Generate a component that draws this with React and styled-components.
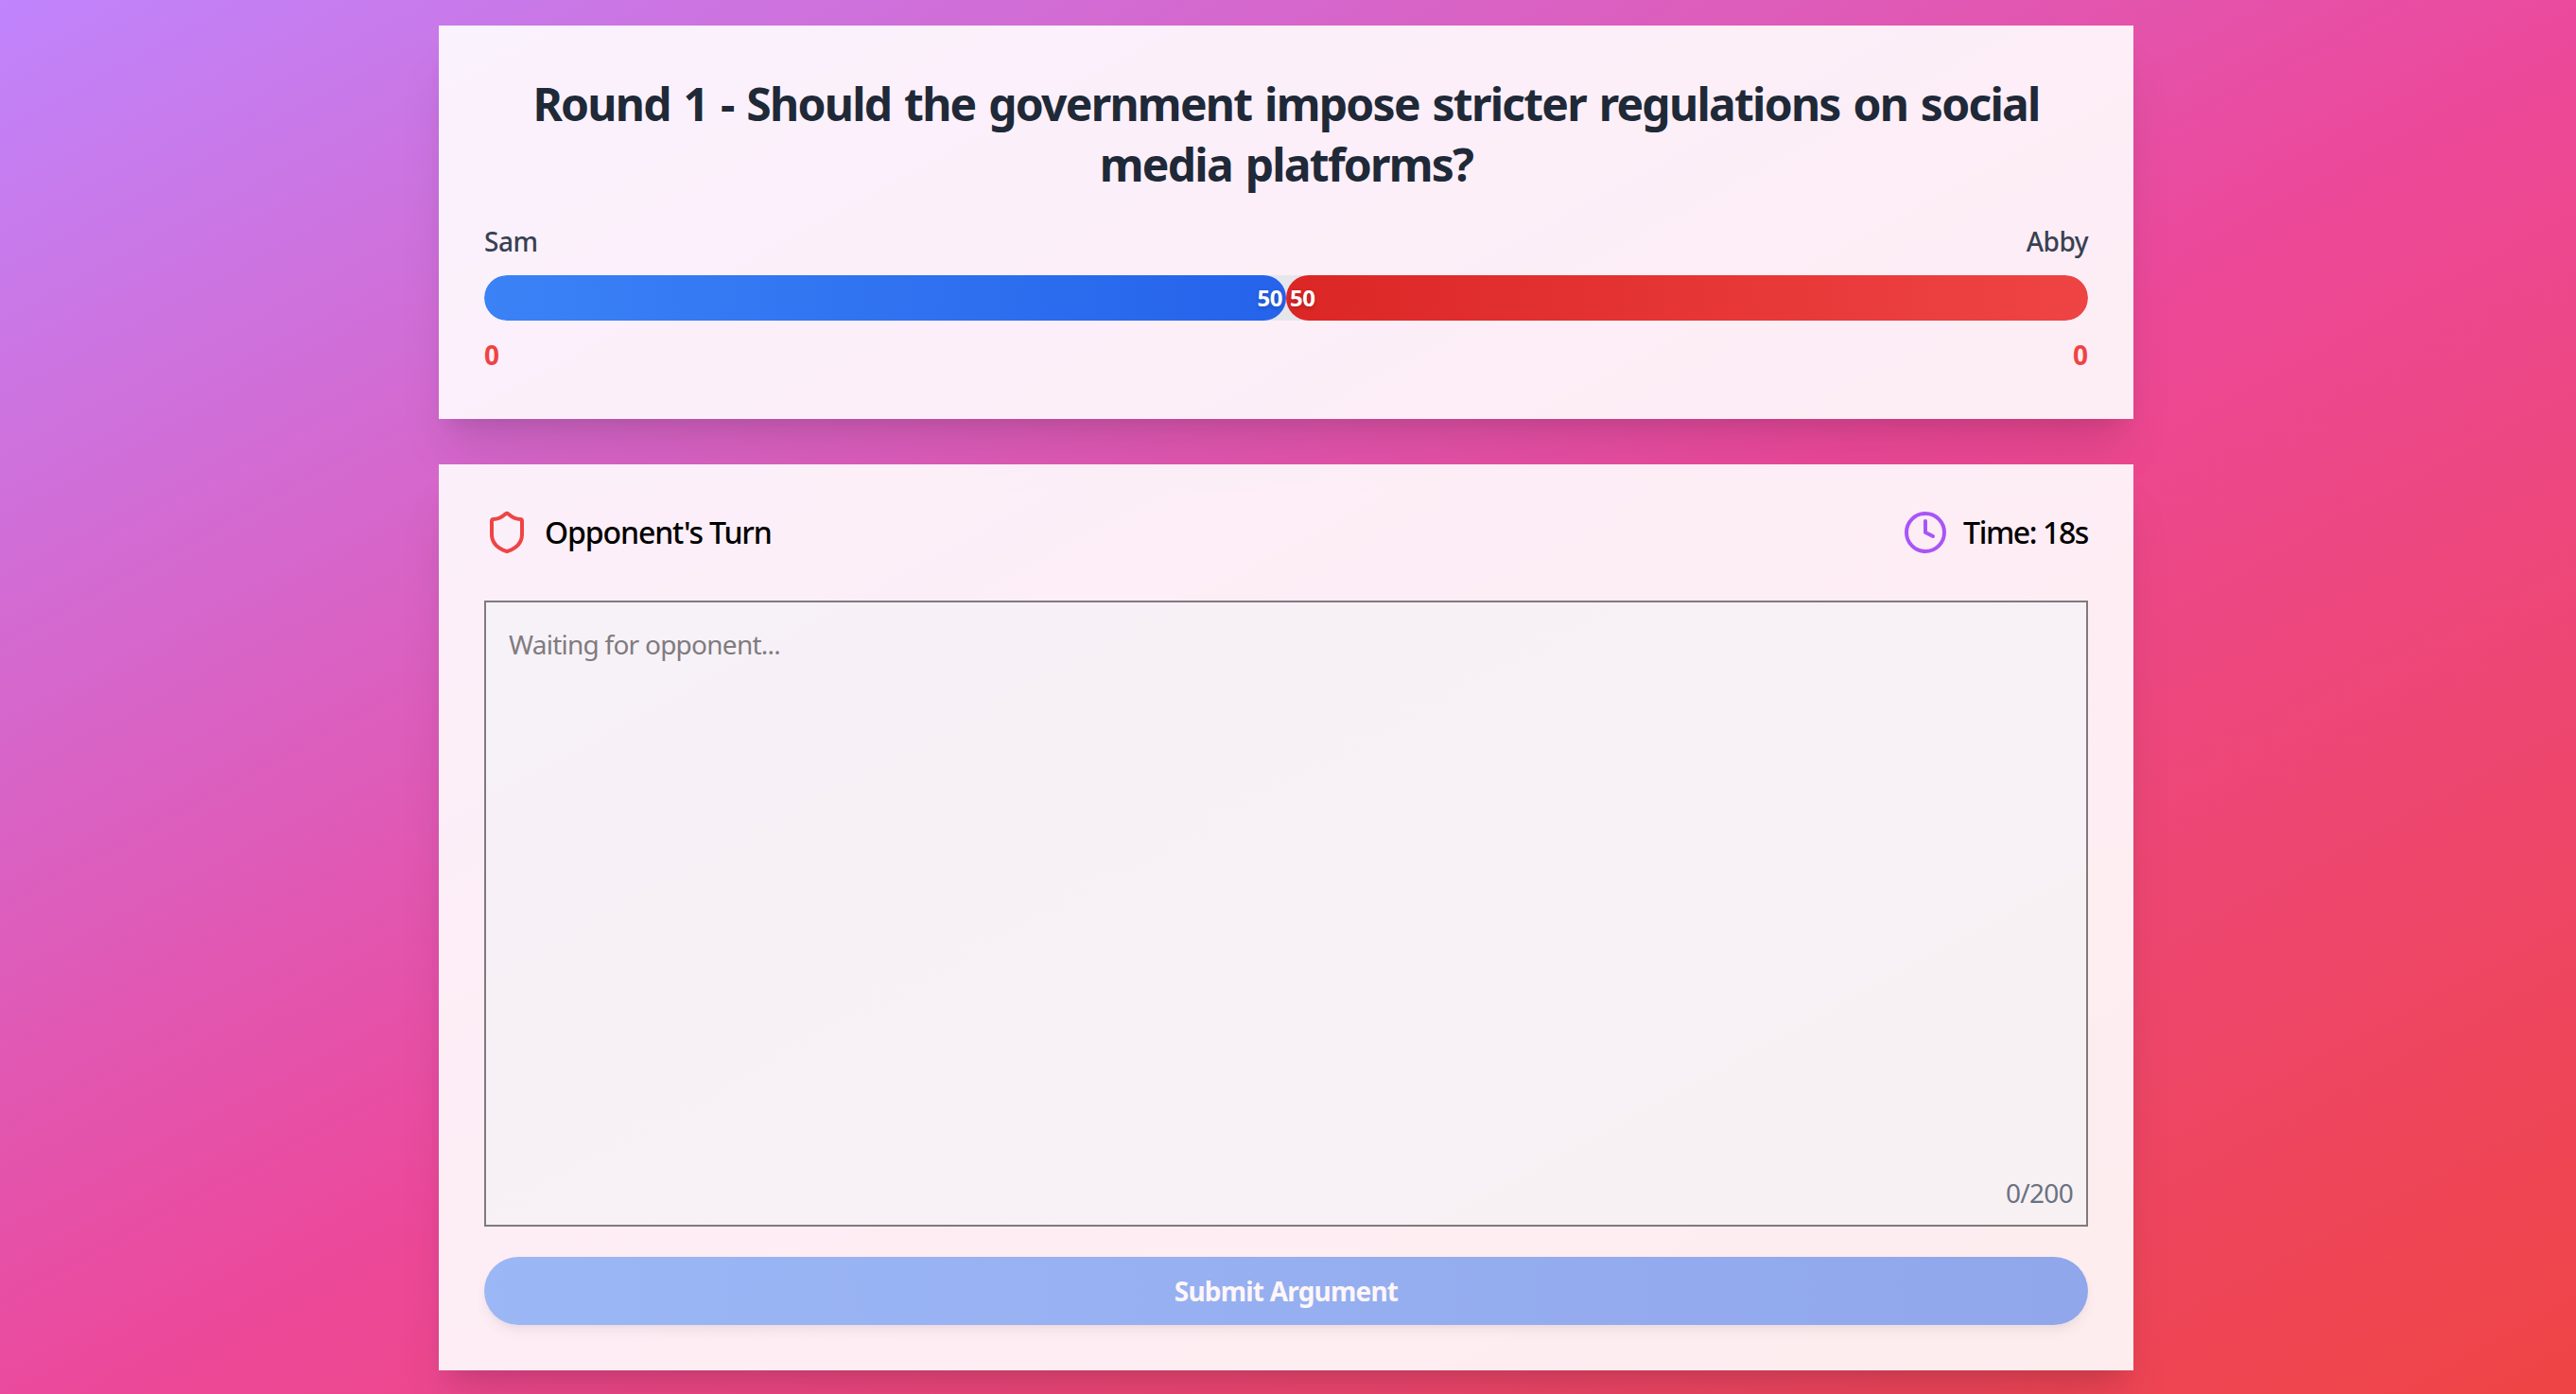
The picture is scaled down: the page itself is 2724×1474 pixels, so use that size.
import React from "react";
import styled, { createGlobalStyle } from "styled-components";
import { Shield, Clock } from "lucide-react";

const Global = createGlobalStyle`
  html, body { margin: 0; padding: 0; }
  body { font-family: "Noto Sans", "Open Sans", "Liberation Sans", sans-serif; }
  * { box-sizing: border-box; }
`;

const Page = styled.div`
  min-height: 1474px;
  padding: 27px 4px 25px 0;
  display: flex;
  flex-direction: column;
  align-items: center;
  gap: 48px;
  background: linear-gradient(to bottom right, #c084fc 0%, #ec4899 52%, #ef4444 100%);
`;

const Card = styled.section`
  width: 1792px;
  padding: 48px;
  background: rgba(255, 255, 255, 0.9);
  box-shadow: 0 40px 50px -10px rgba(0, 0, 0, 0.1), 0 16px 20px -12px rgba(0, 0, 0, 0.1);
`;

const Title = styled.h1`
  margin: 0 0 29px;
  padding-top: 3px;
  font-size: 48px;
  line-height: 64px;
  font-weight: 700;
  letter-spacing: -1.75px;
  word-spacing: 3px;
  text-align: center;
  color: #1f2937;
`;

const SpreadRow = styled.div`
  display: flex;
  justify-content: space-between;
  align-items: center;
`;

const Name = styled.span`
  font-size: 28px;
  line-height: 40px;
  font-weight: 500;
  letter-spacing: -0.5px;
  color: #374151;
`;

const Score = styled.span`
  font-size: 28px;
  line-height: 40px;
  font-weight: 700;
  color: #ef4444;
`;

const Track = styled.div`
  display: flex;
  height: 48px;
  margin: 16px 0;
  border-radius: 24px;
  overflow: hidden;
  background: #e5e7eb;
`;

const Fill = styled.div`
  flex: 1;
  display: flex;
  align-items: center;
  justify-content: ${(p) => (p.$side === "left" ? "flex-end" : "flex-start")};
  padding: 0 4px;
  border-radius: 24px;
  background: ${(p) =>
    p.$side === "left"
      ? "linear-gradient(to right, #3b82f6, #2563eb)"
      : "linear-gradient(to right, #dc2626, #ef4444)"};
  font-size: 24px;
  line-height: 32px;
  font-weight: 700;
  letter-spacing: -0.5px;
  color: #fff;
  text-shadow: 0 2px 4px rgba(0, 0, 0, 0.2);
`;

const TurnHeader = styled.header`
  display: flex;
  justify-content: space-between;
  align-items: center;
  height: 48px;
  margin-bottom: 48px;
`;

const Status = styled.div`
  display: flex;
  align-items: center;
  gap: 16px;
  font-size: 32px;
  line-height: 48px;
  font-weight: 500;
  letter-spacing: ${(p) => p.$tracking};
  color: #000;
`;

const ArgumentBox = styled.div`
  position: relative;
  height: 662px;
  margin-bottom: 32px;
`;

const ArgumentInput = styled.textarea`
  display: block;
  width: 100%;
  height: 100%;
  padding: 24px;
  resize: none;
  border: 2px solid #807a7d;
  border-radius: 0;
  outline: none;
  background: rgba(243, 244, 246, 0.6);
  font-family: inherit;
  font-size: 28px;
  line-height: 40px;
  letter-spacing: -0.75px;
  color: #000;
  &::placeholder {
    color: #807b80;
    opacity: 1;
  }
`;

const Counter = styled.span`
  position: absolute;
  right: 16px;
  bottom: 16px;
  font-size: 28px;
  line-height: 40px;
  letter-spacing: -0.7px;
  color: #6b7280;
`;

const SubmitButton = styled.button`
  display: block;
  width: 100%;
  height: 72px;
  border: 0;
  border-radius: 36px;
  background: linear-gradient(to right, #3b82f6, #2563eb);
  box-shadow: 0 8px 12px -2px rgba(0, 0, 0, 0.1), 0 4px 8px -4px rgba(0, 0, 0, 0.1);
  opacity: 0.5;
  font-family: inherit;
  font-size: 28px;
  font-weight: 700;
  letter-spacing: -0.8px;
  color: #fff;
`;

export default function App() {
  return (
    <Page>
      <Global />
      <Card>
        <Title>Round 1 - Should the government impose stricter regulations on social media platforms?</Title>
        <SpreadRow>
          <Name>Sam</Name>
          <Name>Abby</Name>
        </SpreadRow>
        <Track>
          <Fill $side="left">50</Fill>
          <Fill $side="right">50</Fill>
        </Track>
        <SpreadRow>
          <Score>0</Score>
          <Score>0</Score>
        </SpreadRow>
      </Card>
      <Card>
        <TurnHeader>
          <Status $tracking="-1.1px">
            <Shield size={48} color="#ef4444" />
            Opponent's Turn
          </Status>
          <Status $tracking="-1.4px">
            <Clock size={48} color="#a855f7" />
            Time: 18s
          </Status>
        </TurnHeader>
        <ArgumentBox>
          <ArgumentInput disabled placeholder="Waiting for opponent..." />
          <Counter>0/200</Counter>
        </ArgumentBox>
        <SubmitButton disabled>Submit Argument</SubmitButton>
      </Card>
    </Page>
  );
}
